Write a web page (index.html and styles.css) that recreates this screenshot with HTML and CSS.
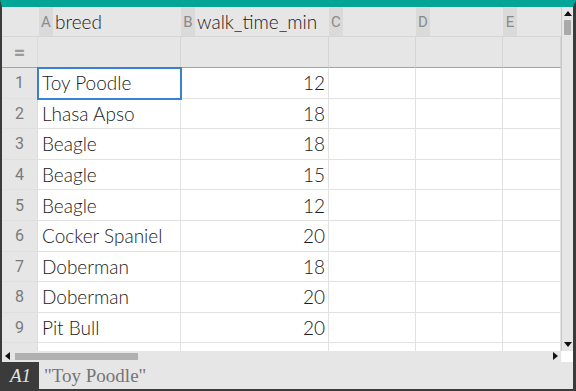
FILE: index.html
```html
<!DOCTYPE html>
<html>
<head>
  <meta charset="utf-8">
  <title>Lists &amp; Spreadsheet</title>
  <link rel="stylesheet" href="styles.css">
</head>
<body>
  <div class="frame">
    <div class="sheet-area">
      <div class="grid">
        <div class="corner"></div>
        <div class="colhead"><span class="letter">A</span><span class="name">breed</span></div>
        <div class="colhead"><span class="letter">B</span><span class="name">walk_time_min</span></div>
        <div class="colhead"><span class="letter">C</span></div>
        <div class="colhead"><span class="letter">D</span></div>
        <div class="colhead"><span class="letter">E</span></div>

        <div class="rownum formula-sign">=</div>
        <div class="formula"></div>
        <div class="formula"></div>
        <div class="formula"></div>
        <div class="formula"></div>
        <div class="formula"></div>

        <div class="rownum">1</div><div class="cell selected">Toy Poodle</div><div class="cell num">12</div><div class="cell"></div><div class="cell"></div><div class="cell"></div>
        <div class="rownum">2</div><div class="cell">Lhasa Apso</div><div class="cell num">18</div><div class="cell"></div><div class="cell"></div><div class="cell"></div>
        <div class="rownum">3</div><div class="cell">Beagle</div><div class="cell num">18</div><div class="cell"></div><div class="cell"></div><div class="cell"></div>
        <div class="rownum">4</div><div class="cell">Beagle</div><div class="cell num">15</div><div class="cell"></div><div class="cell"></div><div class="cell"></div>
        <div class="rownum">5</div><div class="cell">Beagle</div><div class="cell num">12</div><div class="cell"></div><div class="cell"></div><div class="cell"></div>
        <div class="rownum">6</div><div class="cell">Cocker Spaniel</div><div class="cell num">20</div><div class="cell"></div><div class="cell"></div><div class="cell"></div>
        <div class="rownum">7</div><div class="cell">Doberman</div><div class="cell num">18</div><div class="cell"></div><div class="cell"></div><div class="cell"></div>
        <div class="rownum">8</div><div class="cell">Doberman</div><div class="cell num">20</div><div class="cell"></div><div class="cell"></div><div class="cell"></div>
        <div class="rownum">9</div><div class="cell">Pit Bull</div><div class="cell num">20</div><div class="cell"></div><div class="cell"></div><div class="cell"></div>
        <div class="rownum"></div><div class="cell"></div><div class="cell"></div><div class="cell"></div><div class="cell"></div><div class="cell"></div>
      </div>
      <div class="vscroll">
        <span class="arrow up"></span>
        <span class="vthumb"></span>
        <span class="arrow down"></span>
      </div>
    </div>
    <div class="hscroll">
      <div class="htrack">
        <span class="arrow left"></span>
        <span class="hthumb"></span>
        <span class="arrow right"></span>
      </div>
      <div class="hcorner"></div>
    </div>
    <div class="entry-line">
      <div class="cell-ref">A1</div>
      <div class="entry-text">"Toy Poodle"</div>
    </div>
  </div>
</body>
</html>
```
FILE: styles.css
```css
html, body {
    margin: 0;
    padding: 0;
}

body {
    width: 576px;
    height: 391px;
    overflow: hidden;
    background: #3b3b3b;
    font-family: "Lato", "Noto Sans", sans-serif;
}

.frame {
    box-sizing: border-box;
    height: 391px;
    border-top: 7px solid #03a596;
    border-left: 2px solid #3b3b3b;
    border-right: 3px solid #3b3b3b;
    border-bottom: 2px solid #3b3b3b;
    background: #e6e6e6;
    display: flex;
    flex-direction: column;
}

.sheet-area {
    display: flex;
    height: 344px;
}

/* spreadsheet grid */
.grid {
    width: 559px;
    height: 344px;
    overflow: hidden;
    display: grid;
    grid-template-columns: 36px 143px 148px 87px 87px 58px;
    grid-template-rows: 30px 31px;
    grid-auto-rows: 30.6px;
    background: #fff;
}

.grid > div {
    box-sizing: border-box;
    min-width: 0;
}

.corner, .colhead {
    background: #e6e6e6;
    border-bottom: 1px solid #d6d6d6;
}

.colhead {
    display: flex;
    align-items: stretch;
    white-space: nowrap;
    overflow: hidden;
}

.colhead .letter {
    width: 14px;
    background: #dadada;
    color: #8a8a8a;
    font-family: "Roboto", sans-serif;
    font-size: 15px;
    display: flex;
    align-items: center;
    justify-content: center;
}

.colhead:nth-child(2) .letter {
    margin-left: 1px;
}

.colhead .name {
    display: flex;
    align-items: center;
    padding-left: 2px;
    font-size: 19px;
    font-weight: 300;
    color: #1a1a1a;
}

.rownum {
    background: #e6e6e6;
    border-right: 1px solid #dcdcdc;
    border-bottom: 1px solid #e0e0e0;
    color: #7a7a7a;
    font-family: "Roboto", sans-serif;
    font-size: 16px;
    display: flex;
    align-items: center;
    justify-content: center;
}

.formula-sign {
    font-size: 20px;
    font-weight: bold;
    color: #9a9a9a;
    border-bottom: 1px solid #a4a4a4;
}

.formula {
    background: #e6e6e6;
    border-right: 1px solid #d4d4d4;
    border-bottom: 1px solid #a4a4a4;
}

.cell {
    border-right: 1px solid #e2e2e2;
    border-bottom: 1px solid #e2e2e2;
    font-size: 19px;
    font-weight: 300;
    color: #1a1a1a;
    padding: 0 4px;
    display: flex;
    align-items: center;
    white-space: nowrap;
    overflow: hidden;
}

.cell.num {
    justify-content: flex-end;
    padding-right: 3px;
}

.cell.selected {
    outline: 2px solid #3a7fd6;
    outline-offset: -1px;
    position: relative;
    z-index: 1;
    overflow: visible;
}

/* scroll bars */
.vscroll {
    box-sizing: border-box;
    width: 12px;
    background: #e6e6e6;
    border-left: 1px solid #cacaca;
    position: relative;
}

.arrow {
    position: absolute;
    width: 0;
    height: 0;
    border: 4px solid transparent;
}

.arrow.up {
    top: 4px;
    left: 2px;
    border-top: 0;
    border-bottom: 5px solid #111;
}

.arrow.down {
    bottom: 4px;
    left: 2px;
    border-bottom: 0;
    border-top: 5px solid #111;
}

.vthumb {
    position: absolute;
    top: 13px;
    left: 2px;
    width: 7px;
    height: 15px;
    background: #a9a9a9;
    border-radius: 1px;
}

.hscroll {
    display: flex;
    height: 11px;
}

.htrack {
    flex: 1;
    background: #e6e6e6;
    position: relative;
}

.arrow.left {
    left: 3px;
    top: 1px;
    border-left: 0;
    border-right: 5px solid #111;
}

.arrow.right {
    right: 3px;
    top: 1px;
    border-right: 0;
    border-left: 5px solid #111;
}

.hthumb {
    position: absolute;
    left: 13px;
    top: 2px;
    width: 123px;
    height: 7px;
    background: #b0b0b0;
}

.hcorner {
    width: 12px;
    background: #fff;
}

/* entry line */
.entry-line {
    flex: 1;
    display: flex;
    align-items: stretch;
    background: #e6e6e6;
    font-family: "Liberation Serif", serif;
    font-size: 19px;
}

.cell-ref {
    width: 37px;
    background: #3b3b3b;
    color: #e4e4e4;
    font-style: italic;
    display: flex;
    align-items: center;
    justify-content: center;
}

.entry-text {
    display: flex;
    align-items: center;
    padding-left: 5px;
    color: #757575;
}
```
